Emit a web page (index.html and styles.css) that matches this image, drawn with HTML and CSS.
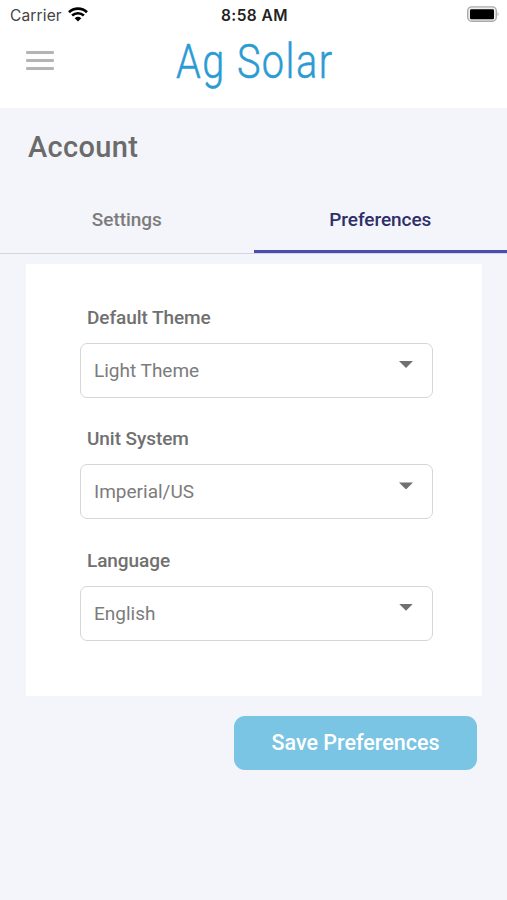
FILE: index.html
```html
<!DOCTYPE html>
<html lang="en">
<head>
<meta charset="utf-8">
<title>Ag Solar</title>
<link rel="stylesheet" href="styles.css">
</head>
<body>
<header class="header">
  <div class="status">
    <div class="carrier"><span>Carrier</span>
      <svg class="wifi" width="20" height="15" viewBox="0 0 20 15" fill="none" stroke="#000" stroke-width="2.6"><path d="M1 5.2C6 .4 14 .4 19 5.2M4.1 8.5C7.4 5.4 12.6 5.4 15.9 8.5"/><path d="M6.7 11.2Q10 8.3 13.3 11.2L10 14.5Z" fill="#000" stroke="none"/></svg>
    </div>
    <time class="clock">8:58 AM</time>
    <svg class="battery" width="34" height="18" viewBox="0 0 34 18"><rect x="1.7" y="1.9" width="28.6" height="14.4" rx="4" fill="#eee" stroke="#aaa" stroke-width="1.4"/><rect x="4" y="4.2" width="24" height="10" rx="1.2"/><path d="M31.6 7q2 2.1 0 4.2z" fill="#aaa"/></svg>
  </div>
  <div class="bar">
    <button class="menu" aria-label="Menu"><i></i><i></i><i></i></button>
    <div class="logo">Ag Solar</div>
  </div>
</header>
<main>
  <h1>Account</h1>
  <nav class="tabs">
    <a class="tab">Settings</a>
    <a class="tab active">Preferences</a>
  </nav>
  <form class="card">
    <div class="field"><label>Default Theme</label><div class="select"><span>Light Theme</span><i class="arrow"></i></div></div>
    <div class="field"><label>Unit System</label><div class="select"><span>Imperial/US</span><i class="arrow"></i></div></div>
    <div class="field"><label>Language</label><div class="select"><span>English</span><i class="arrow"></i></div></div>
  </form>
  <button class="save">Save Preferences</button>
</main>
</body>
</html>
```
FILE: styles.css
```css
* { box-sizing: border-box; }
body {
  margin: 0;
  min-height: 900px;
  background: #f3f5fa;
  font-family: Roboto, sans-serif;
  color: #707070;
}
button { border: 0; padding: 0; font-family: inherit; }
.header { height: 108px; background: #fff; }
.status {
  display: grid;
  grid-template-columns: 1fr auto 1fr;
  align-items: center;
  height: 30px;
  padding: 0 7px 0 10px;
  font-family: Inter, sans-serif;
}
.carrier { display: flex; align-items: center; gap: 6px; font-size: 15.5px; letter-spacing: .15px; color: #444; }
.wifi { margin-top: -1px; }
.clock { font-size: 15.5px; font-weight: 600; color: #222; letter-spacing: .45px; margin-left: -1px; }
.battery { justify-self: end; margin-top: -2px; }
.bar { display: flex; align-items: flex-start; padding-left: 26px; }
.menu {
  display: flex;
  flex-direction: column;
  gap: 5px;
  width: 28px;
  margin-top: 21px;
  background: none;
}
.menu i { height: 3px; width: 28px; border-radius: 1px; background: #b5b5b5; }
.logo {
  margin-left: 121.5px;
  font-size: 49px;
  line-height: 63px;
  font-weight: 300;
  letter-spacing: 1.8px;
  white-space: nowrap;
  color: #2b9bd3;
  -webkit-text-stroke: .5px #2b9bd3;
  transform: scaleX(.81);
  transform-origin: 0 50%;
}
h1 {
  margin: 0;
  padding: 21px 28px 0;
  height: 77px;
  font-size: 29px;
  line-height: 36px;
  font-weight: 500;
  letter-spacing: .35px;
  color: #6b6b6b;
}
.tabs { display: flex; height: 69px; border-bottom: 1px solid #d4d5e2; }
.tab {
  flex: 1;
  height: 68px;
  text-align: center;
  font-size: 19px;
  line-height: 69px;
  font-weight: 500;
  letter-spacing: -.05px;
  color: #7c7c7c;
}
.tab.active { color: #2f2e6b; border-bottom: 3px solid #4a4db0; }
.card {
  display: flex;
  flex-direction: column;
  gap: 29.4px;
  height: 432px;
  margin: 10px 25px 0 26px;
  padding: 42px 49px 0 54px;
  background: #fff;
}
.field label {
  display: block;
  height: 37px;
  padding-left: 7px;
  font-size: 19px;
  line-height: 24px;
  font-weight: 500;
  letter-spacing: -.07px;
}
.select {
  display: flex;
  justify-content: space-between;
  height: 55px;
  padding: 0 19px 0 13px;
  border: 1.5px solid #d6d6d6;
  border-radius: 7px;
  font-size: 19px;
  line-height: 53px;
  color: #7c7c7c;
}
.arrow { width: 14px; height: 7px; margin-top: 17px; background: #707070; clip-path: polygon(0 0, 100% 0, 50% 100%); }
.save {
  display: block;
  width: 243px;
  height: 54px;
  margin: 20px 30px 0 auto;
  padding-bottom: 1px;
  border-radius: 11px;
  background: #7ac4e4;
  color: #fff;
  font-size: 21.5px;
  font-weight: 500;
}
```
